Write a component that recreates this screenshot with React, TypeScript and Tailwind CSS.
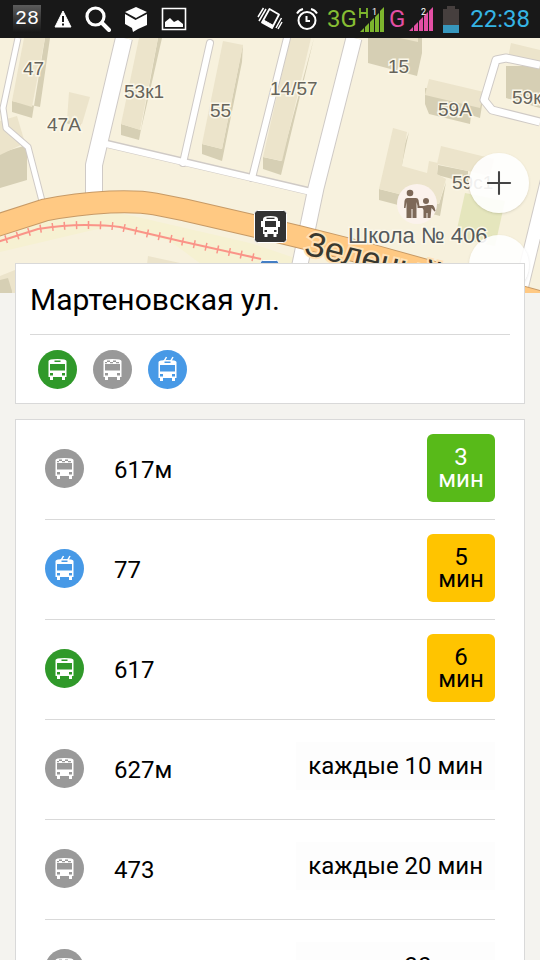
import React from "react";
import { Plus } from "lucide-react";

type vehicle = "bus" | "minibus" | "trolley";

type route = {
  kind: vehicle;
  name: string;
  minutes: number;
  every?: boolean;
  soon?: boolean;
};

const routes: route[] = [
  { kind: "minibus", name: "617м", minutes: 3, soon: true },
  { kind: "trolley", name: "77", minutes: 5 },
  { kind: "bus", name: "617", minutes: 6 },
  { kind: "minibus", name: "627м", minutes: 10, every: true },
  { kind: "minibus", name: "473", minutes: 20, every: true },
  { kind: "minibus", name: "587м", minutes: 30, every: true },
];

const vehicleColor = {
  bus: "#30992a",
  minibus: "#999999",
  trolley: "#4799e6",
};

const vehicleName = {
  bus: "Автобус",
  minibus: "Маршрутное такси",
  trolley: "Троллейбус",
};

function VehicleIcon({ kind }: { kind: vehicle }) {
  const color = vehicleColor[kind];
  const trolley = kind === "trolley";
  return (
    <svg viewBox="0 0 39 39" className="size-[39px] shrink-0" role="img" aria-label={vehicleName[kind]}>
      <circle cx="19.5" cy="19.5" r="19.5" fill={color} />
      {trolley && (
        <path d="M15 12l1.500-1.500L18.500 7M21.500 12l1.500-1.500L25 7" stroke="#fff" strokeWidth="1.5" fill="none" />
      )}
      <g transform={trolley ? "translate(0 1)" : undefined}>
        <path d="M10.500 11Q10.500 9 19.500 9T28.500 11V27H27v3h-3v-3h-9v3h-3v-3h-1.500z" fill="#fff" />
        <path d="M12 14h15v6.500H12zM12 23h3v2.500h-3zM24 23h3v2.500h-3z" fill={color} />
        {kind === "minibus" ? (
          <path
            d="M14 10.500h3V12h-3zM20 10.500h3V12h-3zM12 12h2v1.300h-2zM17 12h3v1.300h-3zM23 12h3v1.300h-3z"
            fill={color}
          />
        ) : (
          <path d="M16.500 10.500h6V12h-6z" fill={color} />
        )}
      </g>
    </svg>
  );
}

function Signal({ color, slot }: { color: string; slot: string }) {
  return (
    <svg viewBox="0 0 24 24" className="h-6 w-6">
      <path d="M0 24l4-4v4zM5 19l4-4v9H5zM10 14l4-4v14h-4zM15 9l4-4v19h-4zM20 4l4-4v24h-4z" fill={color} />
      <text x="12" y="8" fontSize="9" fontFamily="Roboto" fill="#fff">
        {slot}
      </text>
    </svg>
  );
}

function StatusBar() {
  return (
    <header className="flex h-[38px] shrink-0 items-center justify-between bg-[#181818] pr-[10px] pl-[13px] text-white">
      <div className="flex items-center gap-[13px]">
        <div className="flex h-7 w-7 items-center justify-center bg-linear-to-b from-[#5c5c5c] to-[#161616] font-['Liberation_Mono',monospace] text-xl">
          28
        </div>
        <svg viewBox="0 0 18 18" className="size-[18px]">
          <path d="M9 1l8 16H1z" fill="#fff" stroke="#fff" strokeLinejoin="round" />
          <path d="M8 6h2v6H8zM8 13.500h2v2H8z" fill="#181818" />
        </svg>
        <svg viewBox="0 0 26 26" className="size-[26px]">
          <circle cx="10.500" cy="10.500" r="8.500" fill="none" stroke="#fff" strokeWidth="3.200" />
          <path d="M17 17l7 7" stroke="#fff" strokeWidth="4" strokeLinecap="round" />
        </svg>
        <svg viewBox="0 0 24 26" className="h-[26px] w-6">
          <path d="M12 1l11 5-11 6L1 6zM1 8l10.500 6L23 8v11l-9 4-5 3-1-4-7-4z" fill="#fff" />
        </svg>
        <svg viewBox="0 0 26 24" className="h-6 w-[26px]">
          <path d="M1.500 1.500h23v21h-23z" fill="none" stroke="#fff" strokeWidth="1.600" />
          <path d="M4 20v-5l5-4 4 4 4-2 5 4v3z" fill="#fff" />
        </svg>
      </div>
      <div className="flex items-center font-['Roboto',sans-serif]">
        <svg viewBox="0 0 26 24" className="mr-3 h-6 w-[26px]" fill="none" stroke="#fff">
          <path d="M12.500 2L22 7.500 15 21 5 15.500z" strokeWidth="1.800" strokeLinejoin="round" />
          <path d="M5 15l10 6 1.500-2.500L6.500 13z" fill="#fff" />
          <path d="M6.500 1L1 10M9 2L2 14M24.500 11L19 21M25 15l-4 7" strokeWidth="1.500" />
        </svg>
        <svg viewBox="0 0 24 24" className="mr-2 size-6" fill="none" stroke="#fff" strokeWidth="2">
          <circle cx="12" cy="13.500" r="8.500" />
          <path d="M11.500 9v5H15M2 6.500Q4 3 8 2M16 2q4 1 6 4.500" />
        </svg>
        <span className="text-2xl leading-8 text-[#86bd33]">3G</span>
        <svg viewBox="0 0 28 26" className="h-[26px] w-7">
          <path d="M3 26l4-4v4zM8 21l4-4v9H8zM13 16l4-4v14h-4zM18 11l4-4v19h-4zM23 5l4-4v25h-4z" fill="#7db52d" />
          <path d="M3 2v10M10 2v10M3 7h7" stroke="#7db52d" strokeWidth="1.800" />
          <text x="15" y="9" fontSize="9" fontFamily="Roboto" fill="#fff">
            1
          </text>
        </svg>
        <span className="mx-1 text-2xl leading-8 text-[#e34fa4]">G</span>
        <Signal color="#e34fa4" slot="2" />
        <svg viewBox="0 0 16 27" className="mr-[11px] ml-[10px] h-[27px] w-4">
          <path d="M4 0h8v3h4v24H0V3h4z" fill="#463f3e" />
          <path d="M0 19h16v8H0z" fill="#3797bd" />
        </svg>
        <time className="text-2xl leading-8 text-[#35b4e4]">22:38</time>
      </div>
    </header>
  );
}

const road = "M-5 188l50-16q30-6 65-8 30-1 45 2l30 6 65 15 50 12 60 15 180 50";
const tram = "M-6 205l44-14q25-4 47-4t35 2l60 14 81 18";

function CityMap() {
  return (
    <svg
      viewBox="0 0 540 255"
      preserveAspectRatio="xMidYMin slice"
      className="block h-full w-full bg-[#f7f1dd]"
      fontFamily="'Liberation Sans', Arial, sans-serif"
    >
      {/* lawns */}
      <path d="M0 200L60 178l60-3 130 30 60 20v30H240l-70-52-60-15-110 26z" fill="#f6f1d2" />
      <path d="M465 155l40 8-10 45-40-8z" fill="#e5e6bd" />

      {/* buildings, side walls then roofs */}
      <g fill="#d6cfb4">
        <path d="M12 63l28 6 10-69h-5L32 80 12 74z" />
        <path d="M0 115l27-8v35L0 150z" />
        <path d="M85 60l-5 30-14-5zM89 58l-8 30" />
        <path d="M121 86l20 6L162 0h-4l-19 102-18-5z" />
        <path d="M202 106l20 5 21-105-1 18-20 99-20-7z" />
        <path d="M263 119l18 4L314 0l-33 137-18-6z" />
        <path d="M368 0h54v15l-5 23-49-13z" />
        <path d="M425 50l59 5-4 25-9-3-1 9-41-10-4-10z" />
        <path d="M409 94l-8 37-4-3zM379 151l60 15 7-22-6 34-61-16z" />
        <path d="M438 127l30 6v12l-31-8z" />
        <path d="M506 28h34v42l-34-10z" />
      </g>
      <g fill="#ece4cb">
        <path d="M24 0h21L32 69l-20-6z" />
        <path d="M0 83l17-5 8 27L0 117z" />
        <path d="M69 54l21 5-8 27-15-4z" />
        <path d="M139 0h19l-18 92-19-6z" />
        <path d="M223 3l20 4-21 104-20-5z" />
        <path d="M290 0h21l-29 123-19-4z" />
        <path d="M368 0h50v4l-18-4z" />
        <path d="M429 41l55 13-4 16-55-13z" />
        <path d="M393 90l14 4-5 34 25 7 2-12 9 2-1 11 9 5-7 25-60-15z" />
        <path d="M441 108l53 13-4 17-53-12z" />
        <path d="M511 5l29 7v15l-32-7z" />
        <path d="M148 218l32 7v10h-34zM0 238l15-6v23H0z" />
      </g>
      <path d="M0 242l8-2 4 13v2H0z" fill="#d6cfb4" />

      {/* side streets: outline first, white on top */}
      <g fill="none" stroke="#cfcac6" strokeLinejoin="round">
        <path d="M18 0L3 70l3 20 22 19 14 54" strokeWidth="7" />
        <path d="M108 106l205 48" strokeWidth="8" />
        <path d="M210 5l-27 120M287 0l-35 140" strokeWidth="8" strokeLinecap="round" />
        <path d="M124 0L94 127v35" strokeWidth="18" />
        <path d="M354 0l-38 150-22 105" strokeWidth="17" />
        <path d="M540 27l-34-7-10 2-12 40 8 10 48 12" strokeWidth="9" />
        <path d="M548 140l-28 115" strokeWidth="15" />
      </g>
      <g fill="none" stroke="#fff" strokeLinejoin="round">
        <path d="M18 0L3 70l3 20 22 19 14 54" strokeWidth="5" />
        <path d="M106 106l209 49" strokeWidth="6" />
        <path d="M210 5l-27 120M287 0l-35 140" strokeWidth="6" strokeLinecap="round" />
        <path d="M124 0L94 127v35" strokeWidth="16" />
        <path d="M354 0l-38 150-22 105" strokeWidth="15" />
        <path d="M540 27l-34-7-10 2-12 40 8 10 48 12" strokeWidth="7" />
        <path d="M548 140l-28 115" strokeWidth="13" />
      </g>

      {/* main road */}
      <path d={road} fill="none" stroke="#c79a66" strokeWidth="23" />
      <path d={road} fill="none" stroke="#ffc983" strokeWidth="21" />

      {/* tram line */}
      <path d={tram} fill="none" stroke="#fa9488" strokeWidth="2" />
      <path d={tram} fill="none" stroke="#fa9488" strokeWidth="8" strokeDasharray="1.500 10.500" />

      <g fontSize="19" fill="#66645b" stroke="#fbf7e9" strokeWidth="3" paintOrder="stroke">
        <text x="23" y="37">47</text>
        <text x="47" y="93">47А</text>
        <text x="124" y="60">53к1</text>
        <text x="210" y="79">55</text>
        <text x="270" y="57">14/57</text>
        <text x="388" y="35">15</text>
        <text x="438" y="78">59А</text>
        <text x="512" y="66">59к2</text>
        <text x="452" y="151">59с1</text>
      </g>
      <circle cx="417" cy="166" r="20" fill="#fbf2ec" />
      <g fill="#7d6858">
        <circle cx="410" cy="155" r="3.300" />
        <circle cx="426" cy="163" r="3" />
        <path d="M404 160h12q2 0 2.500 2l1 6h4l4-1 5 0q2 1 3 6l-1 .5-3-3.500-1 10h-3v-5h-1v5h-3v-8l-1-2h-5v-2l-1-4v16h-4v-9h-1v9h-5v-16l-1 6h-1.500l.5-7q.5-3 3-3z" />
      </g>
      <text
        transform="translate(303 216) rotate(14)"
        fontSize="34"
        fill="#38382f"
        stroke="#ffe1b5"
        strokeWidth="4"
        paintOrder="stroke"
      >
        Зеленый
      </text>
      <text x="348" y="205" fontSize="22" fill="#555a5c" stroke="#fbf7e9" strokeWidth="3" paintOrder="stroke">
        Школа № 406
      </text>

      <rect x="254.500" y="172.500" width="32" height="32" rx="3" fill="#333" stroke="#fff" />
      <path
        d="M263 183v-2q0-3 7.500-3t7.500 3v2h2v6h-2v7h-1.500v3h-3v-3h-6v3h-3v-3H263v-7h-2v-6z"
        fill="#fff"
      />
      <path d="M265 183h11v6h-11zM264.500 192h2.500v2h-2.500zM274 192h2.500v2H274zM266.500 179.800h8v1.200h-8z" fill="#333" />
      <rect x="260.500" y="222.500" width="18" height="16" rx="2" fill="#447ec4" stroke="#fff" />
    </svg>
  );
}

function RouteRow({ kind, name, minutes, every, soon }: route) {
  return (
    <li className="flex h-[100px] items-center border-b border-[#d9d9d9] pb-[3px]">
      <VehicleIcon kind={kind} />
      <span className="mt-1 ml-[30px] flex-1 text-2xl">{name}</span>
      {every ? (
        <span className="mb-1 bg-[#fdfdfd] px-3 py-2 text-2xl">каждые {minutes} мин</span>
      ) : (
        <span
          className={`flex size-[68px] items-center justify-center rounded-md px-2 text-center text-2xl leading-[22px] ${
            soon ? "bg-[#58ba19] text-white" : "bg-[#ffc400]"
          }`}
        >
          {minutes} мин
        </span>
      )}
    </li>
  );
}

export default function App() {
  return (
    <div className="flex h-screen flex-col overflow-hidden bg-[#f4f3ef] font-['Roboto',sans-serif] text-black">
      <StatusBar />
      <div className="relative h-[255px] shrink-0 overflow-hidden">
        <CityMap />
        <div className="absolute top-[115px] right-[11px] flex flex-col gap-[22px]">
          <button
            type="button"
            aria-label="Приблизить"
            className="flex size-[60px] items-center justify-center rounded-full bg-white/90 text-[#444] shadow"
          >
            <Plus size={38} strokeWidth={1.3} />
          </button>
          <button type="button" aria-label="Отдалить" className="size-[60px] rounded-full bg-white/90 shadow" />
        </div>
      </div>
      <main className="relative -mt-[30px] flex flex-col gap-[15px] px-[15px]">
        <section className="border border-[#d9d9d9] bg-white px-[14px]">
          <h1 className="border-b border-[#d9d9d9] pt-4 pb-[14px] text-[30px] leading-10">Мартеновская ул.</h1>
          <div className="flex gap-4 px-2 pt-[15px] pb-[14px]">
            <VehicleIcon kind="bus" />
            <VehicleIcon kind="minibus" />
            <VehicleIcon kind="trolley" />
          </div>
        </section>
        <ul className="border border-[#d9d9d9] bg-white px-[29px]">
          {routes.map((item) => (
            <RouteRow key={item.name} {...item} />
          ))}
        </ul>
      </main>
    </div>
  );
}
